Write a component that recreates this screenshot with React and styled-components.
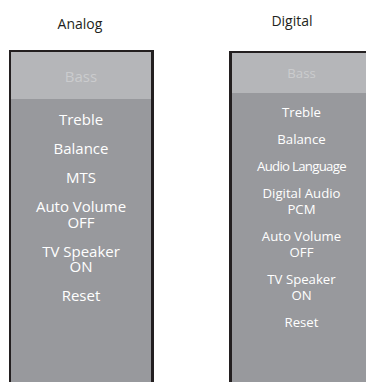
import React from "react";
import styled, { createGlobalStyle } from "styled-components";

const Global = createGlobalStyle`
  html, body { margin: 0; padding: 0; background: #ffffff; overflow: hidden; }
  body { font-family: "Open Sans", "Noto Sans", sans-serif; }
`;

const Page = styled.div`
  display: flex;
  gap: 75px;
  padding-left: 9px;
  width: 366px;
  height: 382px;
  box-sizing: border-box;
  overflow: hidden;
`;

const Column = styled.section`
  display: flex;
  flex-direction: column;
  flex: none;
  width: 145px;
  height: 100%;
`;

const Title = styled.h2`
  margin: 0;
  box-sizing: border-box;
  height: ${(p) => p.$height}px;
  padding-top: ${(p) => p.$top}px;
  padding-right: ${(p) => p.$shift}px;
  font-size: 14px;
  line-height: 20px;
  font-weight: 400;
  color: #231f20;
  text-align: center;
`;

const Panel = styled.div`
  flex: 1;
  display: flex;
  flex-direction: column;
  background: #98999d;
  border-style: solid;
  border-color: #231f20;
  border-width: ${(p) => p.$top}px 3px 0 ${(p) => p.$left}px;
`;

const Header = styled.div`
  height: ${(p) => p.$h}px;
  display: flex;
  align-items: center;
  justify-content: center;
  background: #b5b6b9;
  color: #cbccce;
  font-size: ${(p) => p.$fs}px;
`;

const List = styled.ul`
  list-style: none;
  margin: 0;
  padding: ${(p) => p.$pt}px 0 0;
  display: flex;
  flex-direction: column;
  align-items: center;
  gap: ${(p) => p.$gap}px;
`;

const Item = styled.li`
  color: #ffffff;
  text-align: center;
  white-space: pre-line;
  font-size: ${(p) => p.$fs}px;
  line-height: ${(p) => p.$lh}px;
  letter-spacing: ${(p) => p.$ls || 0}px;
`;

const menus = [
  {
    title: "Analog",
    titleTop: 14,
    titleHeight: 50,
    shift: 3,
    borderTop: 2,
    borderLeft: 2,
    headerH: 47,
    fs: 15,
    lh: 15.5,
    gap: 13.5,
    pt: 13.25,
    items: [
      { t: "Treble" },
      { t: "Balance" },
      { t: "MTS" },
      { t: "Auto Volume\nOFF" },
      { t: "TV Speaker\nON" },
      { t: "Reset" },
    ],
  },
  {
    title: "Digital",
    titleTop: 11,
    titleHeight: 51,
    shift: 19,
    borderTop: 2,
    borderLeft: 3,
    headerH: 40,
    fs: 13.2,
    lh: 16,
    gap: 11,
    pt: 11,
    items: [
      { t: "Treble" },
      { t: "Balance" },
      { t: "Audio Language", ls: -0.7 },
      { t: "Digital Audio\nPCM" },
      { t: "Auto Volume\nOFF" },
      { t: "TV Speaker\nON" },
      { t: "Reset" },
    ],
  },
];

export default function App() {
  return (
    <>
      <Global />
      <Page>
        {menus.map((m) => (
          <Column key={m.title}>
            <Title $top={m.titleTop} $height={m.titleHeight} $shift={m.shift}>
              {m.title}
            </Title>
            <Panel $top={m.borderTop} $left={m.borderLeft}>
              <Header $h={m.headerH} $fs={m.fs}>
                Bass
              </Header>
              <List $pt={m.pt} $gap={m.gap}>
                {m.items.map((it) => (
                  <Item key={it.t} $fs={m.fs} $lh={m.lh} $ls={it.ls}>
                    {it.t}
                  </Item>
                ))}
              </List>
            </Panel>
          </Column>
        ))}
      </Page>
    </>
  );
}
